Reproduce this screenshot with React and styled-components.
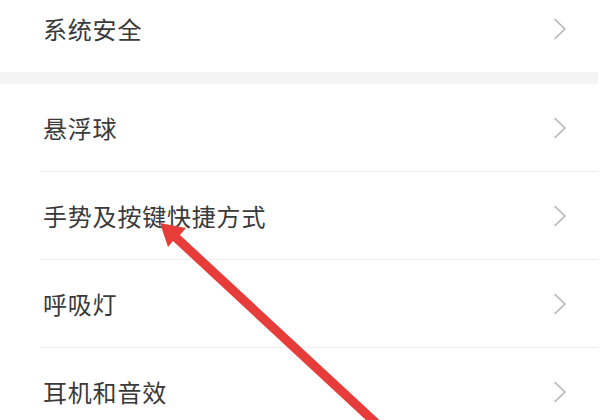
import styled, { createGlobalStyle } from 'styled-components'

const GlobalStyle = createGlobalStyle`
  html, body {
    margin: 0;
    padding: 0;
    background: #ffffff;
    overflow: hidden;
  }
  body {
    font-family: "Noto Sans CJK SC", "Noto Sans", sans-serif;
  }
`

const groups = [
    ['系统安全'],
    ['悬浮球', '手势及按键快捷方式', '呼吸灯', '耳机和音效'],
]

export default function App() {
    return (
        <>
            <GlobalStyle />
            <Page>
                {groups.map((items, g) => (
                    <Group key={g}>
                        {items.map((label, i) => (
                            <Row key={label} last={i === items.length - 1}>
                                <Label>{label}</Label>
                                <Chevron />
                            </Row>
                        ))}
                    </Group>
                ))}
                <Arrow />
            </Page>
        </>
    )
}

function Chevron() {
    return (
        <ChevronIcon width="14" height="22" viewBox="0 0 14 22">
            <path d="M2 1.5 L12 11 L2 20.5" fill="none" stroke="#b4b4b4" strokeWidth="1.6" strokeLinecap="round" strokeLinejoin="round" />
        </ChevronIcon>
    )
}

function Arrow() {
    return (
        <ArrowSvg width="600" height="420" viewBox="0 0 600 420">
            <polygon
                fill="#e63c3a"
                points="160,223 186,228 180,235 388,428 381,434 173,241 168,247"
            />
        </ArrowSvg>
    )
}

const Page = styled.div`
position: relative;
width: 600px;
height: 420px;
overflow: hidden;
box-sizing: border-box;
padding-right: 2px;
`
const Group = styled.div`
display: flex;
flex-direction: column;
background: #ffffff;
&:first-child {
    margin-top: -15px;
}
& + & {
    border-top: 12px solid #f4f4f4;
}
`
const Row = styled.div`
display: flex;
align-items: center;
justify-content: space-between;
height: 87px;
margin-left: 40px;
padding-left: 3px;
padding-right: 31px;
border-bottom: ${({ last }) => (last ? 'none' : '1px solid #efefef')};
`
const Label = styled.span`
font-size: 24px;
color: #3a3a3a;
letter-spacing: 0.8px;
`
const ChevronIcon = styled.svg`
display: block;
`
const ArrowSvg = styled.svg`
position: absolute;
left: 0;
top: 0;
pointer-events: none;
`
